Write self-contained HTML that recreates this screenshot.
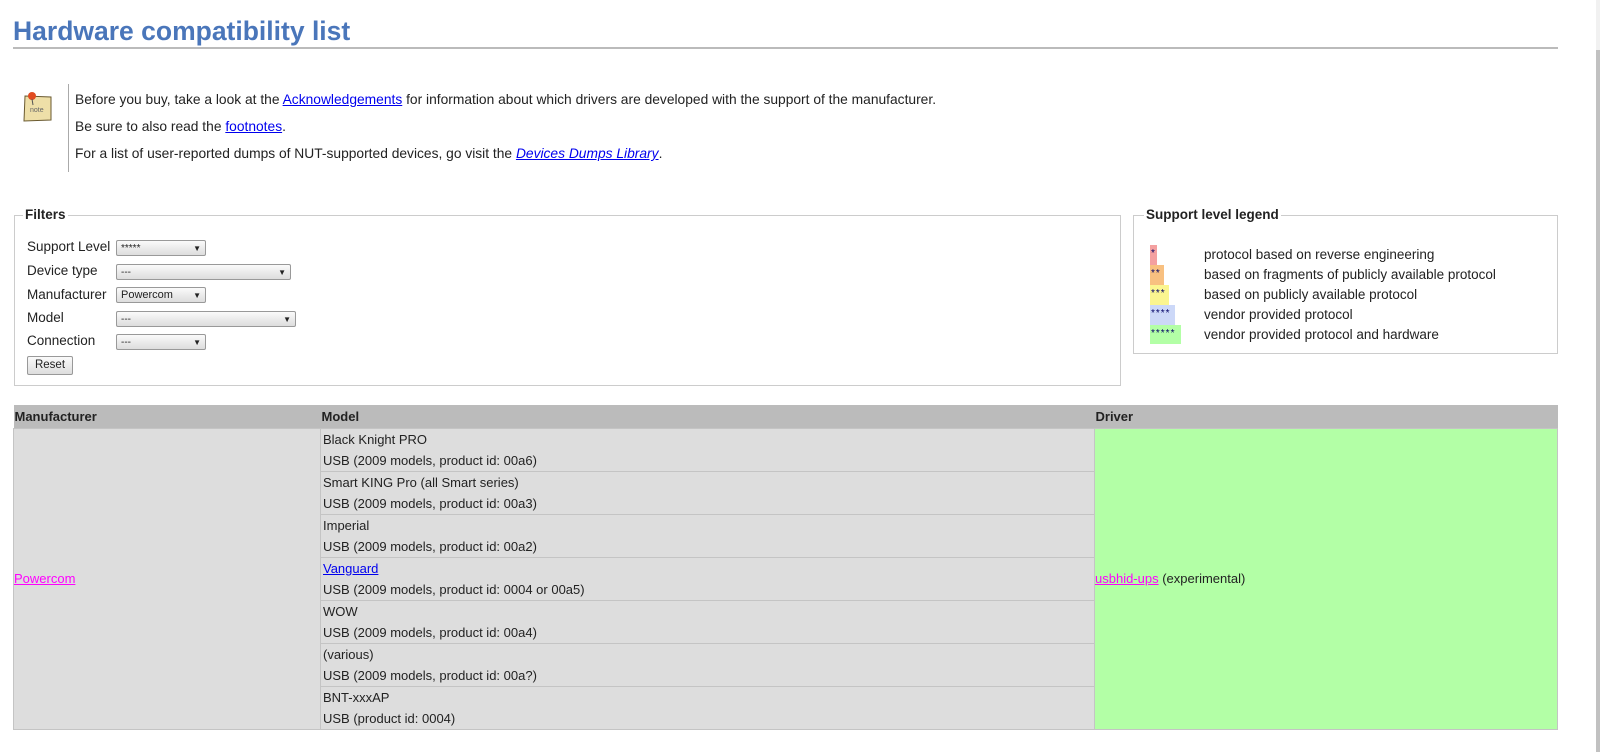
<!DOCTYPE html>
<html><head><meta charset="utf-8"><style>
*{box-sizing:border-box}
body{margin:0;width:1600px;height:752px;overflow:hidden;background:#fff;font-family:"Liberation Sans",sans-serif;font-size:13.5px;color:#222;position:relative}
.a{position:absolute}
h1{position:absolute;left:13px;top:13px;margin:0;font-size:26.5px;font-weight:bold;color:#4a76ba;line-height:36px}
.hr{left:13px;top:47px;width:1545px;height:2px;background:#bbb}
a{color:#00e}
a.m{color:#f0f}
.note p{margin:0;position:absolute;left:75px;white-space:nowrap;font-size:13.8px}
fieldset{position:absolute;border:1px solid #ccc;margin:0;padding:0}
.lg{position:absolute;top:-9px;background:#fff;font-weight:bold;padding:0 2px;font-size:13.5px}
.lbl{position:absolute;left:12px}
.sel{position:absolute;height:16px;border:1px solid #999;border-radius:2px;background:linear-gradient(#fafafa,#ddd);font-size:10px;padding:1px 4px;line-height:13px}
.sel:after{content:"▼";position:absolute;right:4px;top:1px;font-size:8px}
.sw{position:absolute;left:16px;font-size:10px;color:#006;line-height:18px;padding-left:1px;letter-spacing:1px}
.lt{position:absolute;left:70px;white-space:nowrap}
table{position:absolute;left:13px;top:405px;border-collapse:collapse;width:1545px;font-size:13px}
th{background:#bbb;text-align:left;padding:0 1px;height:23px;font-weight:bold}
td{padding:0 2px;border:1px solid #c4c4c4;background:#ddd;line-height:21px;height:42px}
td.d{background:#b3ffa6}
</style></head><body>
<h1>Hardware compatibility list</h1>
<div class="a hr"></div>
<div class="note">
<svg class="a" style="left:22px;top:88px" width="32" height="36" viewBox="0 0 32 36"><path d="M3 8 L29 9 L29 32 L2 33 Z" fill="#eedfa8" stroke="#6a5a30" stroke-width="1"/><circle cx="10" cy="8" r="4" fill="#e14b20"/><line x1="10" y1="11" x2="11" y2="17" stroke="#555"/><text x="8" y="24" font-size="7" fill="#666" font-family="Liberation Sans">note</text></svg>
<div class="a" style="left:68px;top:84px;width:1px;height:88px;background:#aaa"></div>
<p style="top:92px">Before you buy, take a look at the <a href="#">Acknowledgements</a> for information about which drivers are developed with the support of the manufacturer.</p>
<p style="top:119px">Be sure to also read the <a href="#">footnotes</a>.</p>
<p style="top:146px">For a list of user-reported dumps of NUT-supported devices, go visit the <a href="#"><i>Devices Dumps Library</i></a>.</p>
</div>
<fieldset style="left:14px;top:215px;width:1107px;height:171px">
<span class="lg" style="left:8px">Filters</span>
<span class="lbl" style="top:23px">Support Level</span><div class="sel" style="left:101px;top:24px;width:90px">*****</div>
<span class="lbl" style="top:47px">Device type</span><div class="sel" style="left:101px;top:48px;width:175px">---</div>
<span class="lbl" style="top:71px">Manufacturer</span><div class="sel" style="left:101px;top:71px;width:90px;font-size:11px">Powercom</div>
<span class="lbl" style="top:94px">Model</span><div class="sel" style="left:101px;top:95px;width:180px">---</div>
<span class="lbl" style="top:117px">Connection</span><div class="sel" style="left:101px;top:118px;width:90px">---</div>
<div class="a" style="left:12px;top:140px;width:46px;height:19px;border:1px solid #999;border-radius:2px;background:linear-gradient(#fafafa,#ddd);font-size:11.5px;text-align:center;line-height:17px">Reset</div>
</fieldset>
<fieldset style="left:1133px;top:215px;width:425px;height:139px">
<span class="lg" style="left:10px">Support level legend</span>
<div class="sw" style="top:29px;width:7px;height:20px;background:#f4a0a0">*</div>
<div class="sw" style="top:49px;width:14px;height:20px;background:#f8c080">**</div>
<div class="sw" style="top:69px;width:19px;height:20px;background:#fbf590">***</div>
<div class="sw" style="top:89px;width:25px;height:20px;background:#ccd8f8">****</div>
<div class="sw" style="top:109px;width:31px;height:19px;background:#b3ffa6">*****</div>
<span class="lt" style="top:31px">protocol based on reverse engineering</span>
<span class="lt" style="top:51px">based on fragments of publicly available protocol</span>
<span class="lt" style="top:71px">based on publicly available protocol</span>
<span class="lt" style="top:91px">vendor provided protocol</span>
<span class="lt" style="top:111px">vendor provided protocol and hardware</span>
</fieldset>
<table>
<tr><th style="width:307px">Manufacturer</th><th style="width:774px">Model</th><th>Driver</th></tr>
<tr><td rowspan="7" style="padding:0"><a class="m" href="#">Powercom</a></td><td>Black Knight PRO<br>USB (2009 models, product id: 00a6)</td><td rowspan="7" class="d" style="padding:0"><a class="m" href="#">usbhid-ups</a> (experimental)</td></tr>
<tr><td>Smart KING Pro (all Smart series)<br>USB (2009 models, product id: 00a3)</td></tr>
<tr><td>Imperial<br>USB (2009 models, product id: 00a2)</td></tr>
<tr><td><a href="#">Vanguard</a><br>USB (2009 models, product id: 0004 or 00a5)</td></tr>
<tr><td>WOW<br>USB (2009 models, product id: 00a4)</td></tr>
<tr><td>(various)<br>USB (2009 models, product id: 00a?)</td></tr>
<tr><td>BNT-xxxAP<br>USB (product id: 0004)</td></tr>
</table>
<div class="a" style="left:1596px;top:0;width:4px;height:752px;background:#f1f1f1"></div>
<div class="a" style="left:1596px;top:50px;width:4px;height:702px;background:#c1c1c1"></div>
</body></html>
